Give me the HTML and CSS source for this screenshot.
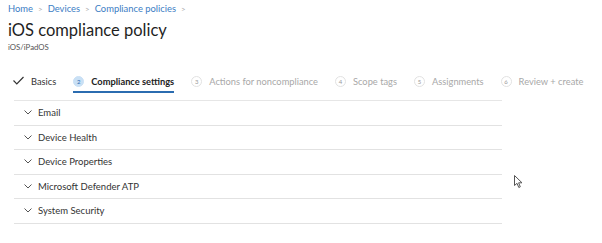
FILE: index.html
```html
<html>
	<head>
		<meta name="viewport" content="width=device-width, initial-scale=1">
		<meta charset=utf-8>
		<link rel="stylesheet" href="styles.css">
		<title>iOS compliance policy</title>
	</head>
	<body>
		<div class="crumbs">
			<a>Home</a><span class="sep">&gt;</span><a>Devices</a><span class="sep">&gt;</span><a>Compliance policies</a><span class="sep">&gt;</span>
		</div>
		<h1 class="title">iOS compliance policy</h1>
		<div class="sub">iOS/iPadOS</div>

		<div class="steps">
			<div class="step done">
				<svg class="chk" width="11" height="9" viewBox="0 0 11 9"><path d="M0.5 4.5 L3.8 7.8 L10.5 1" fill="none" stroke="#333" stroke-width="1.2"/></svg>
				<span>Basics</span>
			</div>
			<div class="step cur">
				<span class="num">2</span>
				<span>Compliance settings</span>
			</div>
			<div class="step">
				<span class="num">3</span>
				<span>Actions for noncompliance</span>
			</div>
			<div class="step">
				<span class="num">4</span>
				<span>Scope tags</span>
			</div>
			<div class="step">
				<span class="num">5</span>
				<span>Assignments</span>
			</div>
			<div class="step">
				<span class="num">6</span>
				<span>Review + create</span>
			</div>
		</div>

		<div class="list">
			<div class="row"><svg class="chev" width="8" height="5" viewBox="0 0 8 5"><path d="M0.5 0.5 L4 4 L7.5 0.5" fill="none" stroke="#555" stroke-width="1"/></svg>Email</div>
			<div class="row"><svg class="chev" width="8" height="5" viewBox="0 0 8 5"><path d="M0.5 0.5 L4 4 L7.5 0.5" fill="none" stroke="#555" stroke-width="1"/></svg>Device Health</div>
			<div class="row"><svg class="chev" width="8" height="5" viewBox="0 0 8 5"><path d="M0.5 0.5 L4 4 L7.5 0.5" fill="none" stroke="#555" stroke-width="1"/></svg>Device Properties</div>
			<div class="row"><svg class="chev" width="8" height="5" viewBox="0 0 8 5"><path d="M0.5 0.5 L4 4 L7.5 0.5" fill="none" stroke="#555" stroke-width="1"/></svg>Microsoft Defender ATP</div>
			<div class="row"><svg class="chev" width="8" height="5" viewBox="0 0 8 5"><path d="M0.5 0.5 L4 4 L7.5 0.5" fill="none" stroke="#555" stroke-width="1"/></svg>System Security</div>
		</div>

		<svg class="cursor" width="10" height="14" viewBox="0 0 10 14"><path d="M0.5 0.5 L0.5 10.5 L3 8.3 L4.8 12.5 L6.3 11.8 L4.6 7.8 L8 7.8 Z" fill="#fff" stroke="#555" stroke-width="1"/></svg>
	</body>
</html>
```

FILE: styles.css
```css
body{
	margin:0px;
	font-family:"Lato","Open Sans",sans-serif;
	background:#fff;
	color:#333;
	position:relative;
}
.crumbs{
	display:flex;
	align-items:center;
	padding:2px 0 0 8px;
	height:13px;
	font-size:9.4px;
	color:#3b7dc4;
}
.crumbs .sep{
	color:#aaa;
	margin:0 5px;
	font-size:8px;
}
.title{
	margin:4px 0 0 8px;
	font-size:16.5px;
	font-weight:400;
	color:#1f1f1f;
	line-height:22px;
}
.sub{
	margin:1px 0 0 8px;
	font-size:7.8px;
	color:#555;
	line-height:10px;
}
.steps{
	display:flex;
	align-items:center;
	margin:18px 0 0 13px;
	height:22px;
	font-size:9.3px;
	color:#a8a8a8;
	white-space:nowrap;
}
.step{
	display:flex;
	align-items:center;
	height:22px;
	margin-right:17px;
	gap:7px;
}
.step.done{
	color:#333;
	margin-right:17px;
}
.chk{
	margin-top:-2px;
}
.step.cur{
	color:#222;
	font-weight:700;
	border-bottom:2px solid #2b6cb0;
	margin-top:2px;
	height:20px;
}
.num{
	display:inline-block;
	width:9px;
	height:9px;
	border-radius:50%;
	border:1px solid #e2e2e2;
	font-size:6px;
	line-height:9px;
	text-align:center;
	color:#999;
	font-weight:400;
}
.cur .num{
	background:#c9e0f5;
	border-color:#c9e0f5;
	color:#2b6cb0;
}
.list{
	margin:8px 0 0 14px;
	width:488px;
	border-top:1px solid #e6e6e6;
}
.row{
	display:flex;
	align-items:center;
	height:23.5px;
	border-bottom:1px solid #e2e2e2;
	font-size:9.5px;
	color:#333;
}
.chev{
	margin:0 6px 0 10px;
}
.cursor{
	position:absolute;
	left:514px;
	top:175px;
}
```
